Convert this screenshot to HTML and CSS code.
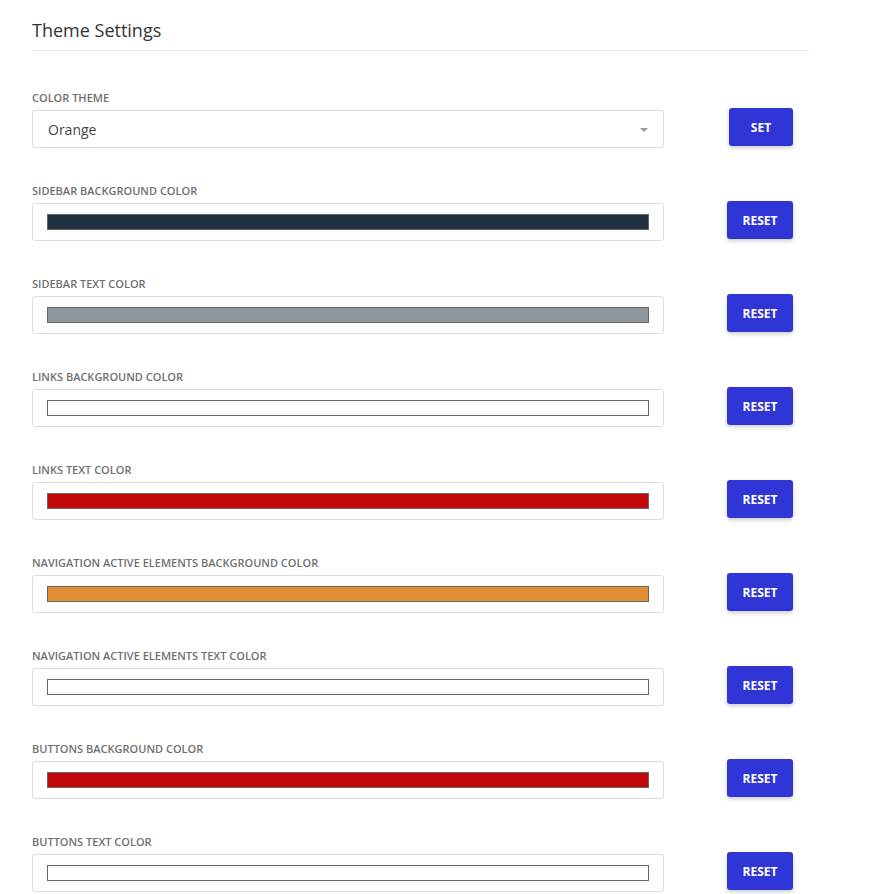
FILE: index.html
```html
<!DOCTYPE html>
<html>
  <head>
    <meta charset="utf-8" />
    <title>Theme Settings</title>
    <link rel="stylesheet" href="styles.css">
  </head>
  <body>
    <div class="settings">
      <h2 class="settings-title">Theme Settings</h2>

      <div class="setting-row">
        <div class="setting-field">
          <label class="setting-label">Color Theme</label>
          <div class="setting-box select-box">
            <span class="select-value">Orange</span>
            <span class="select-caret"></span>
          </div>
        </div>
        <button class="btn btn-set">Set</button>
      </div>

      <div class="setting-row">
        <div class="setting-field">
          <label class="setting-label">Sidebar Background Color</label>
          <div class="setting-box"><div class="swatch" style="background: #22313f"></div></div>
        </div>
        <button class="btn">Reset</button>
      </div>

      <div class="setting-row">
        <div class="setting-field">
          <label class="setting-label">Sidebar Text Color</label>
          <div class="setting-box"><div class="swatch" style="background: #8f979e"></div></div>
        </div>
        <button class="btn">Reset</button>
      </div>

      <div class="setting-row">
        <div class="setting-field">
          <label class="setting-label">Links Background Color</label>
          <div class="setting-box"><div class="swatch" style="background: #ffffff"></div></div>
        </div>
        <button class="btn">Reset</button>
      </div>

      <div class="setting-row">
        <div class="setting-field">
          <label class="setting-label">Links Text Color</label>
          <div class="setting-box"><div class="swatch" style="background: #c00808"></div></div>
        </div>
        <button class="btn">Reset</button>
      </div>

      <div class="setting-row">
        <div class="setting-field">
          <label class="setting-label">Navigation Active Elements Background Color</label>
          <div class="setting-box"><div class="swatch" style="background: #e28e36"></div></div>
        </div>
        <button class="btn">Reset</button>
      </div>

      <div class="setting-row">
        <div class="setting-field">
          <label class="setting-label">Navigation Active Elements Text Color</label>
          <div class="setting-box"><div class="swatch" style="background: #ffffff"></div></div>
        </div>
        <button class="btn">Reset</button>
      </div>

      <div class="setting-row">
        <div class="setting-field">
          <label class="setting-label">Buttons Background Color</label>
          <div class="setting-box"><div class="swatch" style="background: #c00808"></div></div>
        </div>
        <button class="btn">Reset</button>
      </div>

      <div class="setting-row">
        <div class="setting-field">
          <label class="setting-label">Buttons Text Color</label>
          <div class="setting-box"><div class="swatch" style="background: #ffffff"></div></div>
        </div>
        <button class="btn">Reset</button>
      </div>
    </div>
  </body>
</html>
```

FILE: styles.css
```css
body {
  margin: 0;
  background: #fff;
  font-family: "Open Sans", "Liberation Sans", sans-serif;
  color: #333;
}

.settings {
  width: 777px;
  padding: 0 0 0 32px;
}

/* 标题 */
.settings-title {
  margin: 0 0 39px;
  padding: 18px 0 8px;
  font-size: 18px;
  font-weight: 400;
  line-height: 24px;
  color: #333;
  border-bottom: 1px solid #e6e6e6;
}

/* 设置行 */
.setting-row {
  display: flex;
  align-items: flex-end;
  justify-content: space-between;
  padding-right: 16px;
  margin-bottom: 35px;
}

.setting-field {
  width: 632px;
}

.setting-label {
  display: block;
  font-size: 11px;
  font-weight: 600;
  line-height: 16px;
  text-transform: uppercase;
  color: #707070;
  margin-bottom: 4px;
}

.setting-box {
  box-sizing: border-box;
  height: 38px;
  border: 1px solid #dcdcdc;
  border-radius: 3px;
  padding: 10px 14px 0;
  background: #fff;
}

.swatch {
  height: 16px;
  box-sizing: border-box;
  border: 1px solid #666;
}

.select-box {
  display: flex;
  align-items: center;
  justify-content: space-between;
  padding: 0 15px 0 15px;
}

.select-value {
  font-size: 14px;
  color: #444;
}

.select-caret {
  width: 0;
  height: 0;
  border-left: 4px solid transparent;
  border-right: 4px solid transparent;
  border-top: 4px solid #999;
  margin-top: 2px;
}

/* 按钮 */
.btn {
  width: 66px;
  height: 38px;
  margin-bottom: 2px;
  border: none;
  border-radius: 3px;
  background: #3035d5;
  color: #fff;
  font-family: "Open Sans", "Liberation Sans", sans-serif;
  font-size: 12px;
  font-weight: 700;
  text-transform: uppercase;
  box-shadow: 0 2px 4px rgba(0, 0, 0, 0.2);
  cursor: pointer;
}

.btn-set {
  width: 64px;
}
```
